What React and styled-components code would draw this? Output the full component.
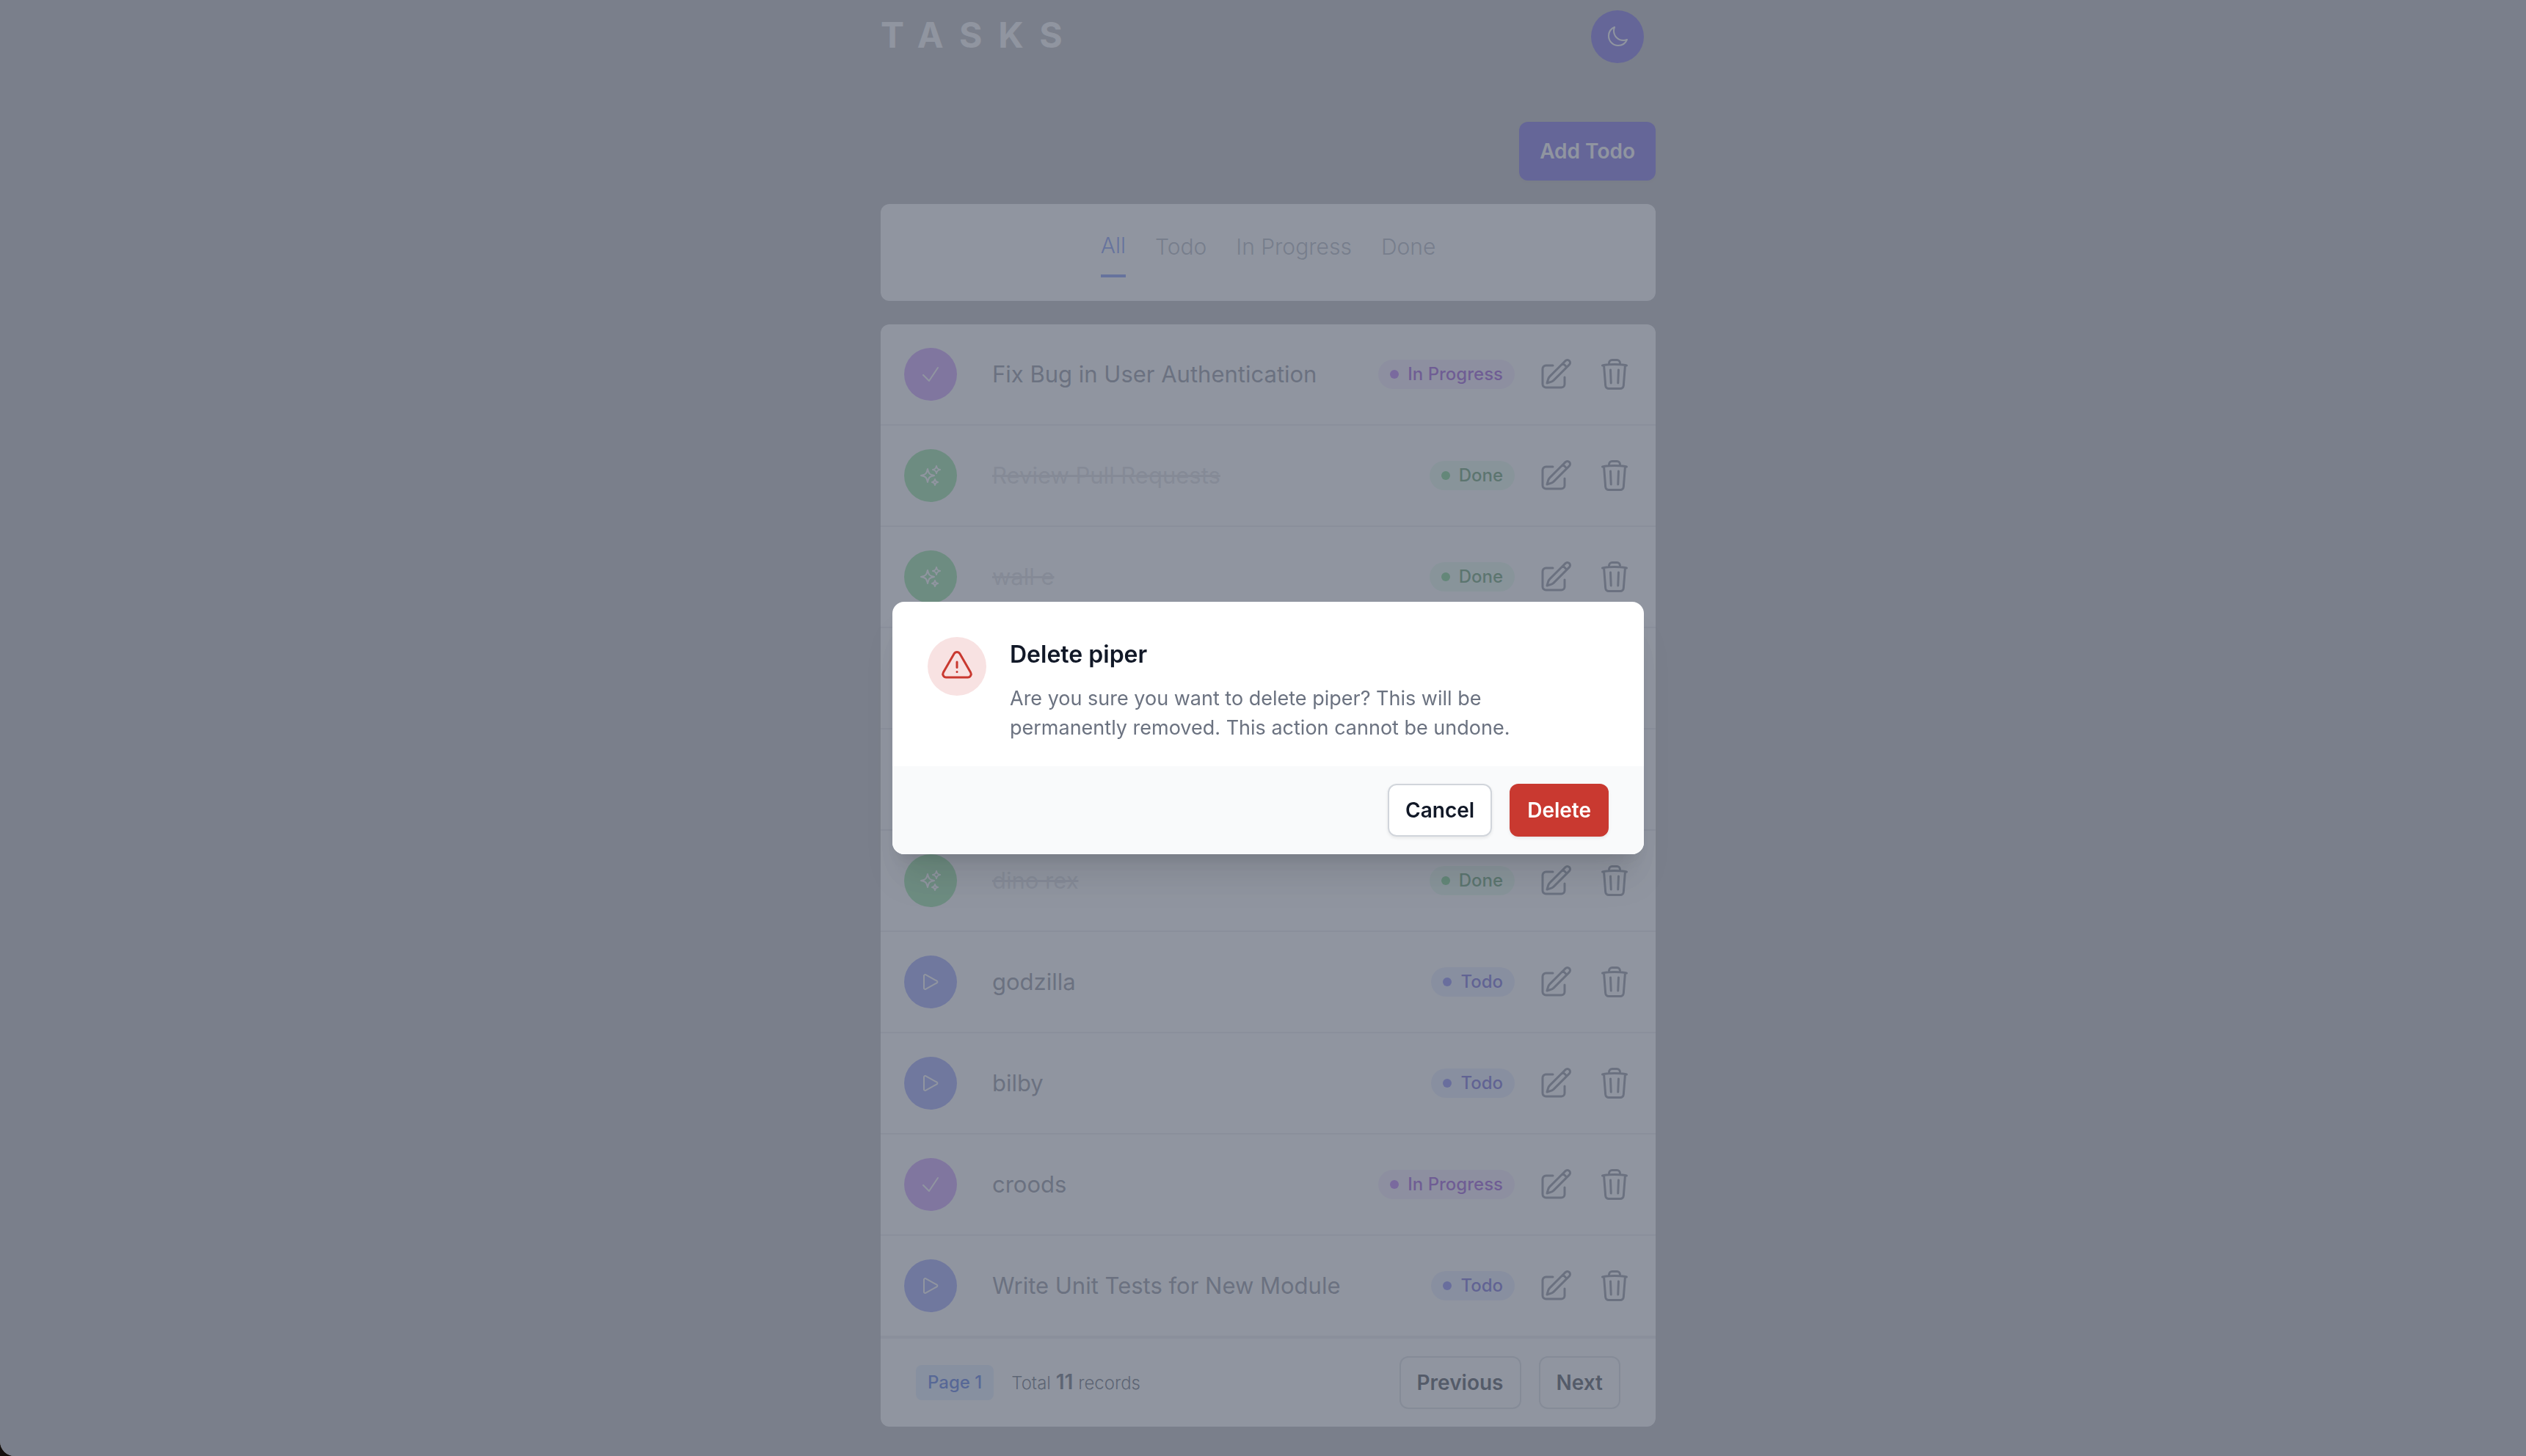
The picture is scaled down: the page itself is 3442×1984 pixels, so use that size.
import React from "react";
import styled, { createGlobalStyle } from "styled-components";
import {
  HiOutlineCheck,
  HiOutlineExclamationTriangle,
  HiOutlineMoon,
  HiOutlinePencilSquare,
  HiOutlinePlay,
  HiOutlineSparkles,
  HiOutlineTrash,
} from "react-icons/hi2";

const GlobalStyle = createGlobalStyle`
  *, *::before, *::after { box-sizing: border-box; }
  html { background: #15100e; }
  body {
    margin: 0;
    font-family: Inter, "Liberation Sans", sans-serif;
    font-size: 31px;
    line-height: 48px;
    -webkit-font-smoothing: antialiased;
  }
  h1, h2, p, ul { margin: 0; padding: 0; }
  ul { list-style: none; }
  button { font: inherit; cursor: pointer; border: 0; padding: 0; background: none; }
`;

const Page = styled.div`
  min-height: 100vh;
  padding: 14px 0 40px 14px;
  background: #a8a7aa;
  border-bottom-left-radius: 20px;
`;

const Container = styled.main`
  max-width: 1056px;
  margin: 0 auto;
  display: flex;
  flex-direction: column;
  gap: 32px;
`;

const Header = styled.header`
  display: flex;
  justify-content: space-between;
  padding: 0 16px 0 0;
  margin-bottom: 48px;
`;

const Title = styled.h1`
  color: #fff;
  font-size: 48px;
  line-height: 68px;
  font-weight: 700;
  letter-spacing: 22px;
`;

const CircleButton = styled.button`
  flex: none;
  display: flex;
  align-items: center;
  justify-content: center;
  width: 72px;
  height: 72px;
  border-radius: 50%;
  color: #fff;
  background: ${(p) => p.$color};
  svg { width: 32px; height: 32px; }
`;

const AddButton = styled.button`
  align-self: flex-end;
  height: 80px;
  padding: 0 28px;
  border-radius: 12px;
  color: #fff;
  background: #5345e0;
  font-size: 28px;
  line-height: 40px;
  font-weight: 600;
  box-shadow: 0 2px 4px rgba(0, 0, 0, 0.05);
`;

const Card = styled.section`
  background: #fff;
  border-radius: 12px;
`;

const Tabs = styled.nav`
  display: flex;
  justify-content: center;
  align-items: center;
  gap: 40px;
  padding: 32px;
`;

const Tab = styled.button`
  padding-bottom: 16px;
  font-size: 30px;
  line-height: 48px;
  font-weight: 300;
  color: ${(p) => (p.$active ? "#5a7af4" : "#9ca3af")};
  ${(p) => p.$active && "border-bottom: 4px solid #5a7af4;"}
`;

const Row = styled.li`
  display: flex;
  align-items: center;
  gap: 32px;
  height: 138px;
  padding: 0 32px;
  border-bottom: 2px solid #e5e7eb;
`;

const TaskName = styled.span`
  flex: 1;
  min-width: 0;
  margin-left: 16px;
  color: ${(p) => (p.$done ? "#d1d3d8" : "#6b7280")};
  text-decoration: ${(p) => (p.$done ? "line-through" : "none")};
`;

const Badge = styled.span`
  display: flex;
  align-items: center;
  gap: 12px;
  padding: 4px 16px;
  border-radius: 20px;
  font-size: 24px;
  line-height: 32px;
  font-weight: 500;
  color: ${(p) => p.$tone.text};
  background: ${(p) => p.$tone.soft};
  &::before {
    content: "";
    width: 12px;
    height: 12px;
    border-radius: 50%;
    background: ${(p) => p.$tone.dot};
  }
`;

const IconButton = styled.button`
  display: flex;
  color: #6b7280;
  svg { width: 48px; height: 48px; }
`;

const Footer = styled.footer`
  display: flex;
  align-items: center;
  gap: 24px;
  padding: 24px 48px;
  border-top: 2px solid #e5e7eb;
`;

const PageBadge = styled.span`
  padding: 8px 16px;
  border-radius: 8px;
  font-size: 24px;
  line-height: 32px;
  font-weight: 500;
  color: #1d4ed8;
  background: #dbeafe;
`;

const Total = styled.p`
  flex: 1;
  font-size: 24px;
  line-height: 40px;
  font-weight: 300;
  color: #374151;
  strong { font-size: 28px; font-weight: 600; }
`;

const Button = styled.button`
  height: 72px;
  padding: 0 24px;
  border-radius: 12px;
  font-size: 28px;
  line-height: 40px;
  font-weight: 600;
  color: ${(p) => (p.$danger ? "#fff" : "#111827")};
  background: ${(p) => (p.$danger ? "#c93930" : "#fff")};
  box-shadow: ${(p) =>
    p.$danger
      ? "0 2px 4px rgba(0, 0, 0, 0.08)"
      : p.$raised
      ? "inset 0 0 0 2px #d1d5db, 0 2px 4px rgba(0, 0, 0, 0.08)"
      : "inset 0 0 0 2px #d1d5db"};
`;

const Overlay = styled.div`
  position: fixed;
  inset: 0;
  display: flex;
  align-items: center;
  justify-content: center;
  padding-left: 14px;
  background: rgba(107, 114, 128, 0.75);
  border-bottom-left-radius: 20px;
`;

const Dialog = styled.div`
  width: 100%;
  max-width: 1024px;
  overflow: hidden;
  border-radius: 16px;
  background: #fff;
  box-shadow: 0 40px 50px -10px rgba(0, 0, 0, 0.1), 0 16px 20px -12px rgba(0, 0, 0, 0.1);
`;

const DialogBody = styled.div`
  display: flex;
  align-items: flex-start;
  gap: 32px;
  padding: 48px 48px 32px;
`;

const Warning = styled.span`
  flex: none;
  display: flex;
  align-items: center;
  justify-content: center;
  width: 80px;
  height: 80px;
  border-radius: 50%;
  color: #c93930;
  background: #f8e2e2;
  svg { width: 48px; height: 48px; }
`;

const DialogText = styled.div`
  display: flex;
  flex-direction: column;
  gap: 16px;
  max-width: 720px;
  h2 { font-size: 32px; line-height: 48px; font-weight: 600; color: #111827; }
  p { font-size: 27px; line-height: 40px; color: #6b7280; }
`;

const DialogActions = styled.div`
  display: flex;
  justify-content: flex-end;
  gap: 24px;
  padding: 24px 48px;
  background: #f9fafb;
`;

const STATUS = {
  todo: {
    label: "Todo",
    icon: HiOutlinePlay,
    circle: "#818cf8",
    tone: { text: "#4338ca", soft: "#e0e7ff", dot: "#6366f1" },
  },
  progress: {
    label: "In Progress",
    icon: HiOutlineCheck,
    circle: "#c084fc",
    tone: { text: "#7e22ce", soft: "#f3e8ff", dot: "#a855f7" },
  },
  done: {
    label: "Done",
    icon: HiOutlineSparkles,
    circle: "#76da84",
    tone: { text: "#30803f", soft: "#dffbe7", dot: "#50c564" },
  },
};

// A null entry is a row the open dialog covers; it keeps its height only.
const TASKS = [
  ["Fix Bug in User Authentication", "progress"],
  ["Review Pull Requests", "done"],
  ["wall e", "done"],
  null,
  null,
  ["dino rex", "done"],
  ["godzilla", "todo"],
  ["bilby", "todo"],
  ["croods", "progress"],
  ["Write Unit Tests for New Module", "todo"],
];

function Task({ name, status }) {
  const { label, icon: Icon, circle, tone } = STATUS[status];
  return (
    <Row>
      <CircleButton type="button" $color={circle} aria-label="Change status">
        <Icon />
      </CircleButton>
      <TaskName $done={status === "done"}>{name}</TaskName>
      <Badge $tone={tone}>{label}</Badge>
      <IconButton type="button" aria-label="Edit"><HiOutlinePencilSquare /></IconButton>
      <IconButton type="button" aria-label="Delete"><HiOutlineTrash /></IconButton>
    </Row>
  );
}

function DeleteDialog({ name }) {
  return (
    <Overlay>
      <Dialog role="dialog" aria-modal="true" aria-labelledby="dialog-title">
        <DialogBody>
          <Warning><HiOutlineExclamationTriangle /></Warning>
          <DialogText>
            <h2 id="dialog-title">{`Delete ${name}`}</h2>
            <p>
              {`Are you sure you want to delete ${name}? This will be permanently removed. This action cannot be undone.`}
            </p>
          </DialogText>
        </DialogBody>
        <DialogActions>
          <Button type="button" $raised>Cancel</Button>
          <Button type="button" $danger>Delete</Button>
        </DialogActions>
      </Dialog>
    </Overlay>
  );
}

export default function App() {
  return (
    <>
      <GlobalStyle />
      <Page>
        <Container>
          <Header>
            <Title>TASKS</Title>
            <CircleButton type="button" $color="#5345e0" aria-label="Toggle theme">
              <HiOutlineMoon />
            </CircleButton>
          </Header>
          <AddButton type="button">Add Todo</AddButton>
          <Card>
            <Tabs>
              {["All", "Todo", "In Progress", "Done"].map((tab) => (
                <Tab key={tab} type="button" $active={tab === "All"}>{tab}</Tab>
              ))}
            </Tabs>
          </Card>
          <Card>
            <ul>
              {TASKS.map((task, i) =>
                task ? <Task key={i} name={task[0]} status={task[1]} /> : <Row key={i} />
              )}
            </ul>
            <Footer>
              <PageBadge>Page 1</PageBadge>
              <Total>Total <strong>11</strong> records</Total>
              <Button type="button">Previous</Button>
              <Button type="button">Next</Button>
            </Footer>
          </Card>
        </Container>
      </Page>
      <DeleteDialog name="piper" />
    </>
  );
}
